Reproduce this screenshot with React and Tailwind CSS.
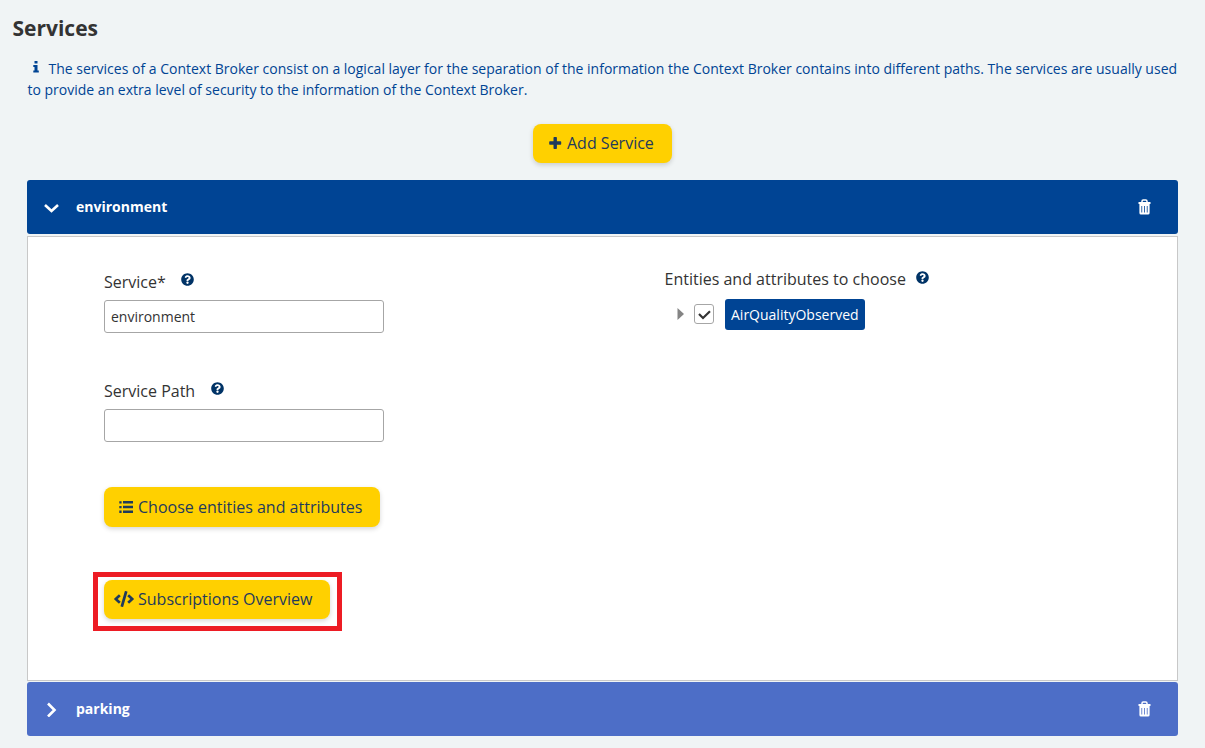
import React from "react";
import { FaQuestionCircle, FaCode } from "react-icons/fa";

function InfoIcon() {
  return (
    <svg className="mr-[10px] ml-[5px] -mt-px mb-[6px] inline h-[12px] w-[6px]" viewBox="0 0 6 12" fill="currentColor">
      <path d="M1.5 0H4.5V2.5H1.5ZM0.3 4H4.5V9.5H5.8V11.5H0.3V9.5H1.5V6H0.3Z" />
    </svg>
  );
}

function PlusIcon() {
  return (
    <svg className="mr-[5px] h-[14px] w-[13px]" viewBox="0 0 13 14" fill="currentColor">
      <path d="M5.2 1H7.2Q7.9 1 7.9 1.7V5.3H11.5Q12.2 5.3 12.2 6V8Q12.2 8.7 11.5 8.7H7.9V12.3Q7.9 13 7.2 13H5.2Q4.5 13 4.5 12.3V8.7H0.9Q0.2 8.7 0.2 8V6Q0.2 5.3 0.9 5.3H4.5V1.7Q4.5 1 5.2 1Z" />
    </svg>
  );
}

function ListIcon() {
  return (
    <svg className="mr-[5px] size-[14px]" viewBox="0 0 14 14" fill="currentColor">
      <path d="M0.3 1.2H2.6V3.5H0.3ZM4 1H14V3.6H4ZM0.3 5.9H2.6V8.2H0.3ZM4 5.7H14V8.3H4ZM0.3 10.6H2.6V12.9H0.3ZM4 10.4H14V13H4Z" />
    </svg>
  );
}

function Trash() {
  return (
    <svg className="h-[16px] w-[13px]" viewBox="0 0 13 16" fill="none">
      <path d="M4 3.5V2.2Q4 1 5.2 1H7.8Q9 1 9 2.2V3.5" stroke="white" strokeWidth="1.5" />
      <path
        fillRule="evenodd"
        fill="white"
        d="M0.5 3H12.5V5H11.6V14Q11.6 15.6 10 15.6H3Q1.4 15.6 1.4 14V5H0.5ZM3.4 7V13.5H4.2V7ZM6.1 7V13.5H6.9V7ZM8.8 7V13.5H9.6V7Z"
      />
    </svg>
  );
}

function Chevron({ open }) {
  return (
    <svg className="h-[16px] w-[16px]" viewBox="0 0 16 16" fill="none" stroke="white" strokeWidth="2.6">
      <path d={open ? "M2 6L8.5 12L15 6" : "M5 2.5L11.5 9L5 15.5"} />
    </svg>
  );
}

function ServiceHeader({ name, open }) {
  const tone = open ? "bg-[#004494]" : "bg-[#4d6ec7]";
  return (
    <div className={`flex h-[54px] items-center rounded-[3px] pl-[16px] pr-[27.4px] text-white ${tone}`}>
      <Chevron open={open} />
      <span className="ml-[17px] flex-1 text-[14px] leading-[20px] font-bold">{name}</span>
      <Trash />
    </div>
  );
}

function Label({ children, gap }) {
  return (
    <div className="flex h-[26px] items-center text-[16px] text-[#333333]">
      <span>{children}</span>
      <FaQuestionCircle className={`size-[13px] text-[#003366] ${gap}`} />
    </div>
  );
}

function Button({ icon, children, className }) {
  return (
    <button
      className={`flex items-center rounded-[8px] bg-[#ffd000] text-[16px] leading-[24px] text-[#1f3a5c] shadow-[0_2px_5px_rgba(0,0,0,0.16)] ${className}`}
    >
      {icon}
      <span>{children}</span>
    </button>
  );
}

export default function App() {
  return (
    <div className="h-[748px] w-[1205px] overflow-hidden bg-[#f0f4f5] pl-[27px] pr-[27px] pt-[14px] font-['Open_Sans',sans-serif]">
      <h1 className="-ml-[14.5px] h-[28px] text-[21px] leading-[28px] font-bold text-[#333333]">Services</h1>
      <p className="mt-[16px] h-[42px] pl-[0.5px] text-[14px] leading-[21px] whitespace-nowrap text-[#004494]">
        <InfoIcon />
        The services of a Context Broker consist on a logical layer for the separation of the information the Context Broker contains into different paths. The services are usually used
        <br />
        to provide an extra level of security to the information of the Context Broker.
      </p>
      <div className="mt-[24px] flex justify-center">
        <Button className="h-[39px] w-[139px] pb-px pl-[16px]" icon={<PlusIcon />}>
          Add Service
        </Button>
      </div>
      <main className="mt-[17px]">
        <ServiceHeader name="environment" open />
        <section className="mt-[2px] mb-px flex h-[445px] border border-[#c8c8c8] bg-white pl-[65px]">
          <div className="w-[571px] pt-[32px]">
            <div className="pl-[11px]">
              <Label gap="mb-[5px] ml-[15px]">Service*</Label>
              <input
                className="mt-[5px] block h-[33px] w-[280px] rounded-[3px] border border-[#a6a6a6] px-[6px] text-[14px] text-[#333333]"
                defaultValue="environment"
              />
              <div className="mt-[45px]">
                <Label gap="mb-[5px] ml-[16px]">Service Path</Label>
              </div>
              <input className="mt-[5px] block h-[33px] w-[280px] rounded-[3px] border border-[#a6a6a6] px-[6px] text-[14px]" />
              <Button className="mt-[45px] h-[40px] w-[276px] pl-[15px]" icon={<ListIcon />}>
                Choose entities and attributes
              </Button>
            </div>
            <div className="mt-[45px] h-[59px] w-[249px] border-[5px] border-[#ed1c24] pt-[3px] pl-[6px]">
              <Button className="h-[39px] w-[226px] pb-px pl-[10px]" icon={<FaCode className="mr-[4px] h-[16px] w-[20px]" />}>
                Subscriptions Overview
              </Button>
            </div>
          </div>
          <div className="pt-[29px] pl-[0.5px]">
            <Label gap="mb-[4px] ml-[10.5px]">Entities and attributes to choose</Label>
            <div className="mt-[7px] flex h-[31px] items-center pl-[12.5px]">
              <svg className="mb-px h-[12px] w-[7px]" viewBox="0 0 7 12">
                <path d="M0.5 0L7 6L0.5 12Z" fill="#848484" />
              </svg>
              <span className="mb-px ml-[10px] flex size-[20px] items-center justify-center rounded-[3px] border border-[#a6a6a6]">
                <svg className="mt-[2px] h-[10px] w-[13px]" viewBox="0 0 13 10" fill="none" stroke="#333333" strokeWidth="2.2">
                  <path d="M1 4L5 8L12 1.2" />
                </svg>
              </span>
              <span className="ml-[11px] h-[31px] w-[140px] rounded-[3px] bg-[#004494] pl-[6px] text-[14px] leading-[31px] text-white">
                AirQualityObserved
              </span>
            </div>
          </div>
        </section>
        <ServiceHeader name="parking" />
      </main>
    </div>
  );
}
